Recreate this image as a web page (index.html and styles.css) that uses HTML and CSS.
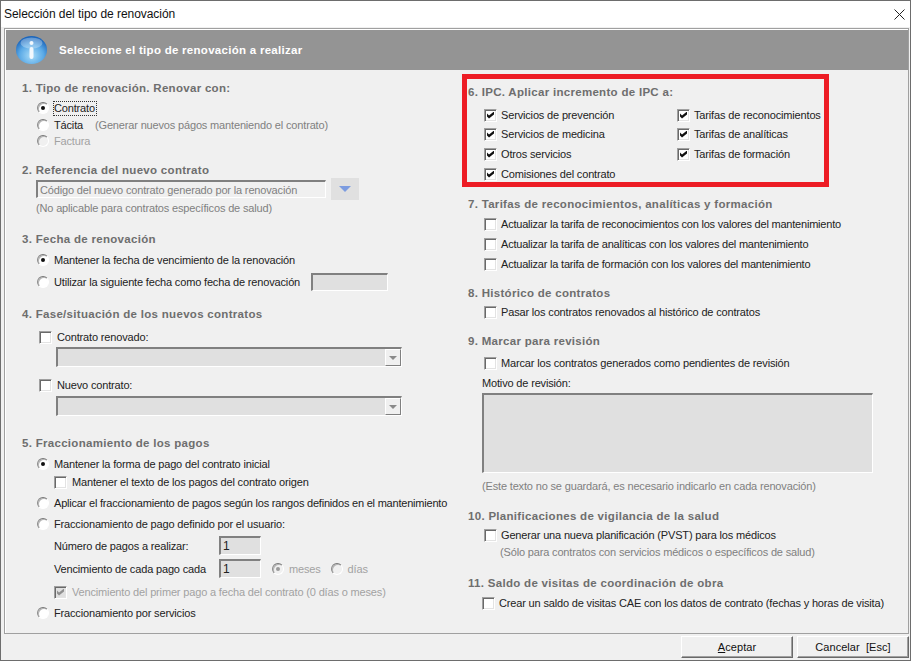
FILE: index.html
```html
<!DOCTYPE html>
<html lang="es">
<head>
    <meta charset="UTF-8">
    <meta name="viewport" content="width=device-width, initial-scale=1.0">
    <title>Selección del tipo de renovación</title>
    <link rel="stylesheet" href="styles.css">
</head>
<body>
<div class="window">

    <!-- Title bar -->
    <div class="titlebar">
        <span class="title">Selección del tipo de renovación</span>
        <svg class="close" width="11" height="11" viewBox="0 0 11 11"><path d="M0.5 0.5L10.5 10.5M10.5 0.5L0.5 10.5" stroke="#222" stroke-width="1" fill="none"/></svg>
    </div>

    <div class="panel">
        <!-- Header -->
        <div class="header">
            <svg class="info" width="31" height="28" viewBox="0 0 31 28">
                <defs>
                    <radialGradient id="ball" cx="50%" cy="70%" r="65%">
                        <stop offset="0" stop-color="#a9dcf8"/>
                        <stop offset="0.6" stop-color="#5aa9e6"/>
                        <stop offset="1" stop-color="#1c66bb"/>
                    </radialGradient>
                </defs>
                <ellipse cx="15.5" cy="14" rx="15.5" ry="14" fill="url(#ball)"/>
                <ellipse cx="15.5" cy="7" rx="11" ry="5.5" fill="#fff" opacity="0.3"/>
                <circle cx="15.5" cy="7" r="2" fill="#f2f8fd"/>
                <rect x="13.5" y="11" width="4" height="12" rx="2" fill="#f2f8fd"/>
            </svg>
            <span class="header-text">Seleccione el tipo de renovación a realizar</span>
        </div>

        <div class="columns">
            <!-- Left column -->
            <div class="col-left">
                <h2>1. Tipo de renovación. Renovar con:</h2>
                <div class="row h16 mt4"><span class="radio on"></span><span class="lbl focus">Contrato</span></div>
                <div class="row h17"><span class="radio"></span><span class="lbl">Tácita</span><span class="hint tacita-hint">(Generar nuevos págos manteniendo el contrato)</span></div>
                <div class="row h16 disabled"><span class="radio"></span><span class="lbl">Factura</span></div>

                <h2 class="mt13">2. Referencia del nuevo contrato</h2>
                <div class="ref-row">
                    <div class="ref-input">Código del nuevo contrato generado por la renovación</div>
                    <div class="ref-btn"><span class="blue-arrow"></span></div>
                </div>
                <div class="row h16 hint hint-flush">(No aplicable para contratos específicos de salud)</div>

                <h2 class="mt15">3. Fecha de renovación</h2>
                <div class="row h16 mt5"><span class="radio on"></span><span class="lbl">Mantener la fecha de vencimiento de la renovación</span></div>
                <div class="row h18 mt5"><span class="radio"></span><span class="lbl date-lbl">Utilizar la siguiente fecha como fecha de renovación</span><span class="field date-field"></span></div>

                <h2 class="mt15">4. Fase/situación de los nuevos contratos</h2>
                <div class="row h16 mt7 row-chk"><span class="check"></span><span class="lbl lbl-check">Contrato renovado:</span></div>
                <div class="select mt2"><span class="select-btn"></span></div>
                <div class="row h16 mt10 row-chk"><span class="check"></span><span class="lbl lbl-check">Nuevo contrato:</span></div>
                <div class="select mt3"><span class="select-btn"></span></div>

                <h2 class="mt19">5. Fraccionamiento de los pagos</h2>
                <div class="row h16 mt5"><span class="radio on"></span><span class="lbl">Mantener la forma de pago del contrato inicial</span></div>
                <div class="row h16 mt2 sub"><span class="check"></span><span class="lbl lbl-check">Mantener el texto de los pagos del contrato origen</span></div>
                <div class="row h16 mt5 tight"><span class="radio"></span><span class="lbl">Aplicar el fraccionamiento de pagos según los rangos definidos en el mantenimiento</span></div>
                <div class="row h16 mt5"><span class="radio"></span><span class="lbl">Fraccionamiento de pago definido por el usuario:</span></div>
                <div class="row h19 mt4 field-row"><span class="field-lbl">Número de pagos a realizar:</span><span class="field num-field">1</span></div>
                <div class="row h19 mt4 field-row">
                    <span class="field-lbl">Vencimiento de cada pago cada</span><span class="field num-field">1</span>
                    <span class="units disabled"><span class="radio on"></span><span class="lbl">meses</span><span class="radio dias"></span><span class="lbl">días</span></span>
                </div>
                <div class="row h16 mt6 sub disabled"><span class="check on"></span><span class="lbl lbl-check">Vencimiento del primer pago a fecha del contrato (0 días o meses)</span></div>
                <div class="row h16 mt5"><span class="radio"></span><span class="lbl">Fraccionamiento por servicios</span></div>
            </div>

            <!-- Right column -->
            <div class="col-right">
                <div class="ipc">
                    <h2>6. IPC. Aplicar incremento de IPC a:</h2>
                    <div class="ipc-grid">
                        <div class="row h16"><span class="check on"></span><span class="lbl lbl-check">Servicios de prevención</span></div>
                        <div class="row h16"><span class="check on"></span><span class="lbl lbl-check">Tarifas de reconocimientos</span></div>
                        <div class="row h16"><span class="check on"></span><span class="lbl lbl-check">Servicios de medicina</span></div>
                        <div class="row h16"><span class="check on"></span><span class="lbl lbl-check">Tarifas de analíticas</span></div>
                        <div class="row h16"><span class="check on"></span><span class="lbl lbl-check">Otros servicios</span></div>
                        <div class="row h16"><span class="check on"></span><span class="lbl lbl-check">Tarifas de formación</span></div>
                        <div class="row h16"><span class="check on"></span><span class="lbl lbl-check">Comisiones del contrato</span></div>
                    </div>
                </div>

                <div class="right-rest">
                    <h2 class="mt9">7. Tarifas de reconocimientos, analíticas y formación</h2>
                    <div class="row h16 mt4 tight"><span class="check"></span><span class="lbl lbl-check">Actualizar la tarifa de reconocimientos con los valores del mantenimiento</span></div>
                    <div class="row h16 mt4 tight"><span class="check"></span><span class="lbl lbl-check">Actualizar la tarifa de analíticas con los valores del mantenimiento</span></div>
                    <div class="row h16 mt4 tight"><span class="check"></span><span class="lbl lbl-check">Actualizar la tarifa de formación con los valores del mantenimiento</span></div>

                    <h2 class="mt13">8. Histórico de contratos</h2>
                    <div class="row h16 mt3"><span class="check"></span><span class="lbl lbl-check">Pasar los contratos renovados al histórico de contratos</span></div>

                    <h2 class="mt13">9. Marcar para revisión</h2>
                    <div class="row h16 mt6"><span class="check"></span><span class="lbl lbl-check">Marcar los contratos generados como pendientes de revisión</span></div>
                    <div class="row h16 mt4 plain">Motivo de revisión:</div>
                    <div class="field memo mt2"></div>
                    <div class="row h16 mt5 hint plain">(Este texto no se guardará, es necesario indicarlo en cada renovación)</div>

                    <h2 class="mt14">10. Planificaciones de vigilancia de la salud</h2>
                    <div class="row h16 mt3"><span class="check"></span><span class="lbl lbl-check">Generar una nueva planificación (PVST) para los médicos</span></div>
                    <div class="row h16 mt1 hint hint-pvst">(Sólo para contratos con servicios médicos o específicos de salud)</div>

                    <h2 class="mt15">11. Saldo de visitas de coordinación de obra</h2>
                    <div class="row h16 mt4 row-cae"><span class="check"></span><span class="lbl lbl-check">Crear un saldo de visitas CAE con los datos de contrato (fechas y horas de visita)</span></div>
                </div>
            </div>
        </div>
    </div>

    <!-- Buttons -->
    <div class="footer">
        <button class="btn"><u>A</u>ceptar</button>
        <button class="btn">Cancelar&nbsp; [Esc]</button>
    </div>
</div>
</body>
</html>
```

FILE: styles.css
```css
* {
    margin: 0;
    padding: 0;
    box-sizing: border-box;
}
body {
    width: 911px;
    height: 661px;
    overflow: hidden;
    background-color: #f0f0f0;
    color: #222;
    font-family: "Liberation Sans", Arial, sans-serif;
    font-size: 11px;
    letter-spacing: -0.16px;
}
.window {
    width: 911px;
    height: 661px;
    display: flex;
    flex-direction: column;
    border: 1px solid #6d6d6d;
    background: #f0f0f0;
}
/* Title bar */
.titlebar {
    height: 26px;
    flex: none;
    display: flex;
    justify-content: space-between;
    align-items: center;
    padding: 0 5px 0 3px;
    background: #fff;
}
.title {
    font-size: 12px;
    letter-spacing: -0.05px;
    color: #111;
}
/* Panel */
.panel {
    height: 606px;
    flex: none;
    margin: 1px 1px 0 3px;
    border: 1px solid #a0a0a0;
    box-shadow: inset 1px 1px 0 #fff;
    padding: 1px 0 0 1px;
}
.header {
    height: 40px;
    display: flex;
    align-items: center;
    padding-left: 10px;
    background: #949494;
}
.info {
    flex: none;
}
.header-text {
    margin-left: 12px;
    color: #fff;
    font-weight: bold;
    font-size: 11.5px;
    letter-spacing: 0.28px;
}
.columns {
    display: flex;
}
.col-left {
    width: 456px;
    flex: none;
    padding: 10px 0 0 16px;
}
.col-right {
    flex: 1;
    padding-top: 4px;
}
h2 {
    height: 16px;
    line-height: 16px;
    font-size: 11.5px;
    font-weight: bold;
    letter-spacing: 0.3px;
    color: #6e6e6e;
    white-space: nowrap;
}
/* Rows */
.row {
    display: flex;
    align-items: center;
    padding-left: 15px;
    white-space: nowrap;
}
.col-right .row {
    padding-left: 16px;
}
.tight {
    letter-spacing: -0.21px;
}
.h16 { height: 16px; }
.h17 { height: 17px; }
.h18 { height: 18px; }
.h19 { height: 19px; }
.mt1 { margin-top: 1px; }
.mt2 { margin-top: 2px; }
.mt3 { margin-top: 3px; }
.mt4 { margin-top: 4px; }
.mt5 { margin-top: 5px; }
.mt6 { margin-top: 6px; }
.mt7 { margin-top: 7px; }
.mt9 { margin-top: 9px; }
.mt10 { margin-top: 10px; }
.mt13 { margin-top: 13px; }
.mt14 { margin-top: 14px; }
.mt15 { margin-top: 15px; }
.mt19 { margin-top: 19px; }
.lbl {
    margin-left: 5px;
}
.lbl-check {
    margin-left: 4px;
}
.col-left .lbl-check {
    margin-left: 5px;
}
.row-chk {
    padding-left: 17px;
}
.focus {
    outline: 1px dotted #333;
    outline-offset: 0;
    padding: 0 1px 0 0;
    line-height: 13px;
}
.hint {
    color: #808080;
}
.tacita-hint {
    margin-left: 12px;
}
.hint-flush {
    padding-left: 14px;
}
.disabled,
.disabled .lbl {
    color: #a2a2a2;
}
.sub {
    padding-left: 32px;
}
.col-right .plain {
    padding-left: 14px;
}
.col-right .row-cae {
    padding-left: 14px;
}
/* Radio and check */
.radio {
    width: 12px;
    height: 12px;
    flex: none;
    position: relative;
    border-radius: 50%;
    background: #fff;
    border: 1px solid #fff;
    border-top-color: #777;
    border-left-color: #8a8a8a;
    box-shadow: inset 1px 1px 0 #b5b5b5;
}
.radio.on::after {
    content: "";
    position: absolute;
    left: 3px;
    top: 3px;
    width: 4px;
    height: 4px;
    border-radius: 50%;
    background: #111;
}
.disabled .radio {
    background: #f0f0f0;
}
.disabled .radio.on::after {
    background: #999;
}
.check {
    width: 13px;
    height: 13px;
    flex: none;
    position: relative;
    background: #fff;
    border: 1px solid #fff;
    border-top-color: #a0a0a0;
    border-left-color: #a0a0a0;
    box-shadow: inset 1px 1px 0 #696969, inset -1px -1px 0 #e3e3e3;
}
.check.on::after {
    content: "";
    position: absolute;
    left: 2px;
    top: 2px;
    width: 7px;
    height: 7px;
    background: #111;
    clip-path: polygon(0 2px, 2px 4px, 7px 0, 7px 3px, 2px 7px, 0 5px);
}
.disabled .check {
    background: #e0e0e0;
}
.disabled .check.on::after {
    background: #8f8f8f;
}
/* Fields */
.field {
    display: block;
    background: #e0e0e0;
    border: 1px solid #fff;
    border-top: 2px solid #808080;
    border-left: 2px solid #808080;
}
.date-lbl {
    width: 251px;
    flex: none;
}
.date-field {
    width: 77px;
    height: 18px;
    margin-left: 6px;
}
.num-field {
    width: 42px;
    height: 19px;
    padding-left: 2px;
    line-height: 16px;
    font-size: 12px;
}
.field-row {
    padding-left: 32px;
}
.field-lbl {
    width: 165px;
    flex: none;
}
.units {
    display: flex;
    align-items: center;
    margin-left: 11px;
}
.dias {
    margin-left: 10px;
}
.memo {
    width: 391px;
    height: 80px;
    margin-left: 14px;
}
/* Reference input */
.ref-row {
    height: 22px;
    display: flex;
    align-items: center;
    padding-left: 14px;
    gap: 5px;
}
.ref-input {
    width: 290px;
    height: 18px;
    padding-left: 2px;
    line-height: 16px;
    color: #808080;
    background: #f0f0f0;
    border: 1px solid #fff;
    border-top: 2px solid #808080;
    border-left: 2px solid #808080;
    white-space: nowrap;
}
.ref-btn {
    width: 28px;
    height: 22px;
    display: flex;
    align-items: center;
    justify-content: center;
    background: #e0e0e0;
}
.blue-arrow {
    width: 0;
    height: 0;
    border-left: 6px solid transparent;
    border-right: 6px solid transparent;
    border-top: 6px solid #7c9ce0;
}
/* Selects */
.select {
    width: 346px;
    height: 20px;
    margin-left: 34px;
    display: flex;
    justify-content: flex-end;
    background: #e0e0e0;
    border: 1px solid #fff;
    border-top: 2px solid #808080;
    border-left: 2px solid #808080;
}
.select-btn {
    width: 16px;
    height: 17px;
    display: flex;
    align-items: center;
    justify-content: center;
    background: #f0f0f0;
    border: 1px solid #808080;
    border-top-color: #fff;
    border-left-color: #fff;
}
.select-btn::after {
    content: "";
    width: 0;
    height: 0;
    border-left: 4px solid transparent;
    border-right: 4px solid transparent;
    border-top: 4px solid #8a8a8a;
}
/* IPC box */
.ipc {
    width: 367px;
    height: 113px;
    padding: 5px 0 0 1px;
    border: 5px solid #ed1c24;
}
.ipc-grid {
    display: grid;
    grid-template-columns: 193px 1fr;
    grid-template-rows: 19px 20px 20px 16px;
    margin-top: 7px;
}
.right-rest {
    padding-left: 6px;
}
.col-right .hint-pvst {
    padding-left: 32px;
}
/* Footer */
.footer {
    flex: 1;
    display: flex;
    justify-content: flex-end;
    gap: 4px;
    padding: 2px 1px 0 0;
}
.btn {
    width: 112px;
    height: 22px;
    font-family: inherit;
    font-size: 11px;
    letter-spacing: 0.05px;
    color: #111;
    background: #f0f0f0;
    border: 1px solid #fff;
    border-right-color: #696969;
    border-bottom-color: #696969;
    box-shadow: inset -1px -1px 0 #a0a0a0;
}
```
